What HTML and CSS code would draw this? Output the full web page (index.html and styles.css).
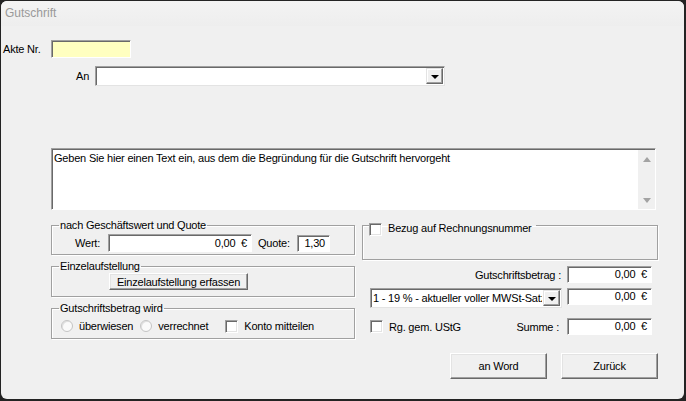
FILE: index.html
```html
<!DOCTYPE html>
<html lang="de">
<head>
  <meta charset="UTF-8" />
  <title>Gutschrift</title>
  <link rel="stylesheet" href="styles.css">
</head>
<body>
  <div class="window">
    <div class="titlebar">Gutschrift</div>

    <div class="row-akte">
      <span class="lbl-akte">Akte Nr.</span>
      <div class="field yellow"></div>
    </div>

    <div class="row-an">
      <span class="lbl-an">An</span>
      <div class="combo combo-an">
        <div class="combo-text"></div>
        <div class="drop"><span class="tri"></span></div>
      </div>
    </div>

    <div class="memo">
      <div class="memo-text">Geben Sie hier einen Text ein, aus dem die Begründung für die Gutschrift hervorgeht</div>
      <div class="vscroll">
        <span class="arr-up"></span>
        <span class="arr-down"></span>
      </div>
    </div>

    <div class="lower">
      <div class="col-left">
        <fieldset class="group g-wert">
          <legend>nach Geschäftswert und Quote</legend>
          <div class="line">
            <span class="lbl-wert">Wert:</span>
            <div class="field num wert">0,00 &nbsp;€</div>
            <span class="lbl-quote">Quote:</span>
            <div class="field num quote">1,30</div>
          </div>
        </fieldset>

        <fieldset class="group g-einzel">
          <legend>Einzelaufstellung</legend>
          <button class="btn btn-einzel">Einzelaufstellung erfassen</button>
        </fieldset>

        <fieldset class="group g-betrag">
          <legend>Gutschriftsbetrag wird</legend>
          <div class="line">
            <span class="radio r1"></span><span class="opt">überwiesen</span>
            <span class="radio r2"></span><span class="opt">verrechnet</span>
            <span class="check c-konto"></span><span class="opt">Konto mitteilen</span>
          </div>
        </fieldset>
      </div>

      <div class="col-right">
        <fieldset class="group g-bezug">
          <legend class="legend-check">
            <span class="check"></span><span class="opt">Bezug auf Rechnungsnummer</span>
          </legend>
        </fieldset>

        <div class="amt-row row-a">
          <span class="amt-lbl">Gutschriftsbetrag :</span>
          <div class="field num amount">0,00 &nbsp;€</div>
        </div>

        <div class="amt-row row-b">
          <div class="combo combo-mwst">
            <div class="combo-text">1 - 19 % - aktueller voller MWSt-Satz</div>
            <div class="drop"><span class="tri"></span></div>
          </div>
          <div class="field num amount">0,00 &nbsp;€</div>
        </div>

        <div class="amt-row row-c">
          <span class="check c-rg"></span><span class="opt">Rg. gem. UStG</span>
          <span class="amt-lbl summe">Summe :</span>
          <div class="field num amount">0,00 &nbsp;€</div>
        </div>

        <div class="buttons">
          <button class="btn btn-big">an Word</button>
          <button class="btn btn-big">Zurück</button>
        </div>
      </div>
    </div>
  </div>
</body>
</html>
```

FILE: styles.css
```css
html, body {
  margin: 0;
  padding: 0;
}

body {
  background-color: #232323;
  font-family: "Liberation Sans", Arial, sans-serif;
  font-size: 11px;
  letter-spacing: -0.2px;
  color: #000;
}

.window {
  margin: 1px 2px 2px 1px;
  height: 398px;
  background-color: #f0f0f0;
  border-radius: 6px;
  overflow: hidden;
}

.titlebar {
  height: 25px;
  line-height: 25px;
  padding-left: 4px;
  background: linear-gradient(#f3f3f3, #eeeeee);
  color: #999;
  font-size: 12px;
  letter-spacing: 0;
}

/* sunken field */
.field {
  box-sizing: border-box;
  background-color: #fff;
  border: 1px solid;
  border-color: #a0a0a0 #fff #fff #a0a0a0;
  box-shadow: inset 1px 1px 0 #696969;
  white-space: nowrap;
  overflow: hidden;
}

.field.yellow {
  background-color: #ffffc0;
  width: 80px;
  height: 18px;
}

.field.num {
  text-align: right;
  padding-right: 4px;
}

.row-akte {
  display: flex;
  align-items: center;
  margin-top: 14px;
  height: 18px;
}

.lbl-akte {
  width: 50px;
  padding-left: 2px;
  box-sizing: border-box;
}

.row-an {
  display: flex;
  align-items: center;
  margin-top: 8px;
  height: 20px;
  padding-left: 75px;
}

.lbl-an {
  width: 19px;
}

/* combo box */
.combo {
  box-sizing: border-box;
  display: flex;
  background-color: #fff;
  border: 1px solid;
  border-color: #a0a0a0 #e3e3e3 #e3e3e3 #a0a0a0;
  box-shadow: inset 1px 1px 0 #696969;
  padding: 1px;
  height: 20px;
}

.combo-text {
  flex: 1;
  white-space: nowrap;
  overflow: hidden;
  line-height: 16px;
  padding-left: 1px;
}

.combo-an {
  width: 350px;
}

.drop {
  box-sizing: border-box;
  width: 17px;
  height: 16px;
  margin-left: 1px;
  background-color: #f0f0f0;
  border: 1px solid;
  border-color: #e3e3e3 #696969 #696969 #e3e3e3;
  box-shadow: inset -1px -1px 0 #a0a0a0, inset 1px 1px 0 #fff;
  display: flex;
  align-items: center;
  justify-content: center;
}

.tri {
  width: 0;
  height: 0;
  border-left: 4px solid transparent;
  border-right: 4px solid transparent;
  border-top: 4px solid #000;
  margin-top: 1px;
}

/* memo */
.memo {
  box-sizing: border-box;
  display: flex;
  margin: 62px 0 0 50px;
  width: 605px;
  height: 62px;
  background-color: #fff;
  border: 1px solid;
  border-color: #a0a0a0 #fff #fff #a0a0a0;
  box-shadow: inset 1px 1px 0 #696969;
}

.memo-text {
  flex: 1;
  padding: 3px 0 0 2px;
  line-height: 13px;
}

.vscroll {
  width: 17px;
  background-color: #f0f0f0;
  margin-top: 1px;
  display: flex;
  flex-direction: column;
  align-items: center;
  justify-content: space-between;
  padding: 7px 0 6px;
  box-sizing: border-box;
}

.arr-up {
  width: 0;
  height: 0;
  border-left: 4px solid transparent;
  border-right: 4px solid transparent;
  border-bottom: 5px solid #a3a3a3;
}

.arr-down {
  width: 0;
  height: 0;
  border-left: 4px solid transparent;
  border-right: 4px solid transparent;
  border-top: 5px solid #a3a3a3;
}

/* lower part */
.lower {
  display: flex;
  margin: 9px 0 0 50px;
}

.col-left {
  width: 304px;
}

.col-right {
  width: 296px;
  margin-left: 7px;
}

.group {
  margin: 0;
  padding: 0;
  border: 1px solid #a0a0a0;
  box-shadow: 1px 1px 0 #fff, inset 1px 1px 0 #fff;
  min-width: 0;
}

.group legend {
  margin-left: 7px;
  padding: 0 1px;
  line-height: 13px;
  height: 13px;
}

.line {
  display: flex;
  align-items: center;
}

.g-wert {
  padding: 2px 0 2px 0;
}

.g-wert .line {
  height: 18px;
}

.lbl-wert {
  padding-left: 23px;
  width: 56px;
  box-sizing: border-box;
}

.field.wert {
  width: 144px;
  height: 18px;
  line-height: 16px;
}

.lbl-quote {
  padding-left: 6px;
  width: 45px;
  box-sizing: border-box;
}

.field.quote {
  width: 33px;
  height: 17px;
  line-height: 15px;
  margin-top: 1px;
}

.g-einzel {
  margin-top: 5px;
  padding: 0 0 6px 0;
}

.btn {
  box-sizing: border-box;
  font-family: "Liberation Sans", Arial, sans-serif;
  font-size: 11px;
  letter-spacing: -0.2px;
  color: #000;
  background-color: #f0f0f0;
  border: 1px solid;
  border-color: #fff #696969 #696969 #fff;
  box-shadow: inset -1px -1px 0 #a0a0a0, inset 1px 1px 0 #e3e3e3;
  padding: 0;
  margin: 0;
}

.btn-einzel {
  display: block;
  margin-left: 57px;
  width: 139px;
  height: 17px;
  line-height: 14px;
}

.g-betrag {
  margin-top: 5px;
  padding: 3px 0 4px 0;
}

.g-betrag .line {
  height: 16px;
}

.radio {
  box-sizing: border-box;
  width: 12px;
  height: 12px;
  border-radius: 50%;
  border: 1px solid #c4c4c4;
  background-color: #fafafa;
  box-shadow: inset 1px 1px 0 #e0e0e0;
}

.r1 {
  margin-left: 9px;
}

.r2 {
  margin-left: 7px;
}

.opt {
  margin-left: 6px;
}

.check {
  box-sizing: border-box;
  display: inline-block;
  width: 13px;
  height: 13px;
  background-color: #fff;
  border: 1px solid;
  border-color: #a0a0a0 #fff #fff #a0a0a0;
  box-shadow: inset 1px 1px 0 #696969, inset -1px -1px 0 #e3e3e3;
}

.c-konto {
  margin-left: 17px;
}

/* right column */
.g-bezug {
  padding: 0 0 27px 0;
}

.group legend.legend-check {
  display: flex;
  align-items: flex-start;
  margin-left: 6px;
  padding: 0 4px 0 0;
}

.legend-check .check {
  margin-top: 4px;
}

.legend-check .opt {
  margin-top: 3px;
}

.amt-row {
  display: flex;
  align-items: center;
  padding-right: 6px;
}

.amt-lbl {
  margin-left: auto;
  margin-right: 6px;
}

.field.amount {
  width: 85px;
  height: 17px;
  line-height: 15px;
}

.row-a {
  margin-top: 6px;
}

.row-b {
  margin-top: 5px;
  align-items: flex-start;
}

.combo-mwst {
  width: 192px;
  margin-left: 8px;
  margin-right: 5px;
}

.row-c {
  margin-top: 10px;
}

.c-rg {
  margin-left: 8px;
}

.summe {
  margin-right: 8px;
}

.buttons {
  display: flex;
  justify-content: flex-end;
  gap: 14px;
  margin-top: 18px;
}

.btn-big {
  width: 97px;
  height: 26px;
}
```
